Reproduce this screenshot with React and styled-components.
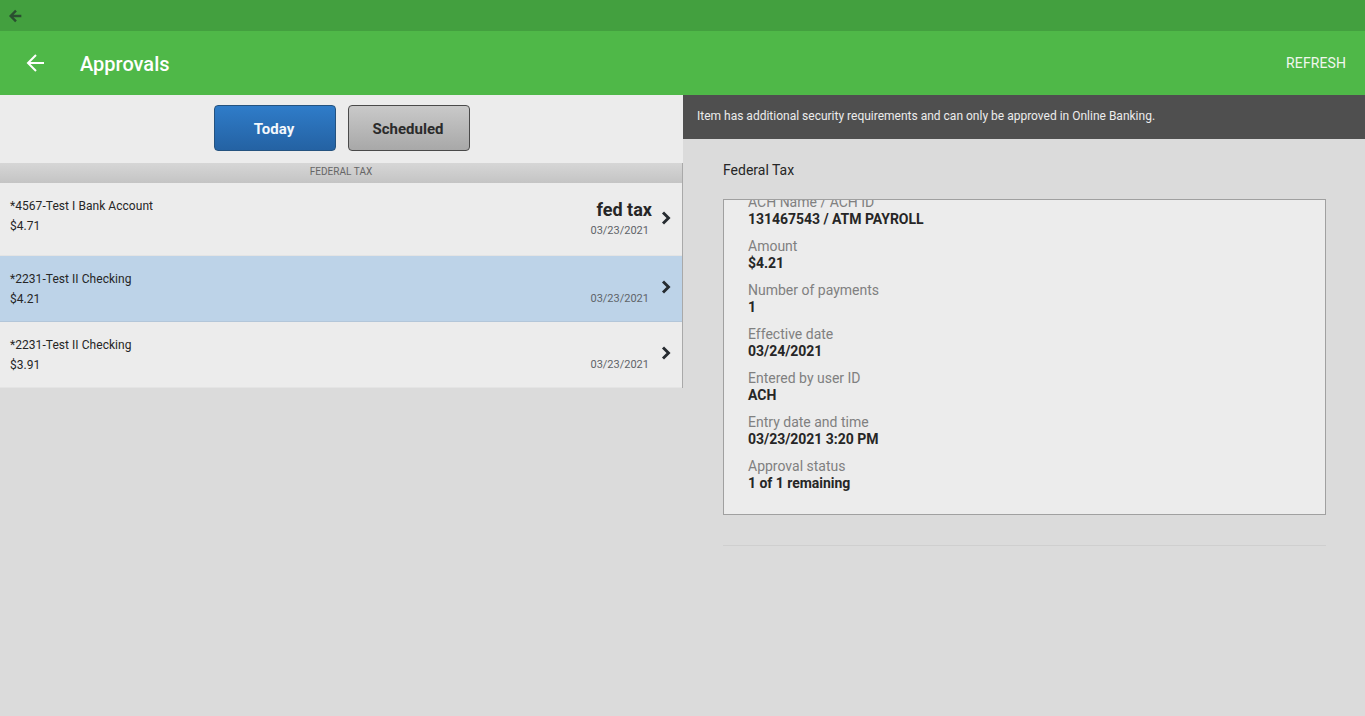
import React from "react";
import styled, { createGlobalStyle } from "styled-components";

const Global = createGlobalStyle`
  html, body { margin: 0; padding: 0; height: 100%; background: #dbdbdb; }
  body { font-family: Roboto, "Liberation Sans", sans-serif; color: #222; -webkit-font-smoothing: antialiased; }
  * { box-sizing: border-box; }
`;

const Page = styled.div`
  width: 1365px;
  height: 716px;
  display: flex;
  flex-direction: column;
  background: #dbdbdb;
  overflow: hidden;
`;

const StatusBar = styled.div`
  height: 31px;
  flex: none;
  background: #43a03f;
  display: flex;
  align-items: center;
  padding-left: 8px;
  color: #2a4f30;
`;

const AppBar = styled.header`
  height: 64px;
  flex: none;
  background: #4fb848;
  display: flex;
  align-items: center;
  color: #fff;
`;

const BackButton = styled.div`
  width: 80px;
  padding-left: 24px;
  display: flex;
  align-items: center;
`;

const Title = styled.h1`
  margin: 2px 0 0;
  flex: 1;
  font-size: 20px;
  font-weight: 500;
  line-height: 24px;
`;

const RefreshAction = styled.span`
  font-size: 14px;
  font-weight: 400;
  padding-right: 19px;
  letter-spacing: 0.1px;
  color: #f0f7ee;
`;

const Body = styled.div`
  flex: 1;
  display: flex;
  min-height: 0;
`;

const LeftColumn = styled.section`
  width: 683px;
  flex: none;
`;

const Segments = styled.div`
  height: 68px;
  background: #ececec;
  display: flex;
  align-items: center;
  justify-content: center;
  gap: 12px;
  padding: 0 0 2px 1px;
`;

const Segment = styled.button`
  width: 122px;
  height: 46px;
  border-radius: 4px;
  font-family: inherit;
  font-size: 15px;
  font-weight: 700;
  padding: 1px 2px 0 0;
  border: 1px solid ${(p) => (p.$active ? "#24527f" : "#4a4a4a")};
  color: ${(p) => (p.$active ? "#f4f8fc" : "#2b2b2b")};
  background: ${(p) =>
    p.$active
      ? "linear-gradient(#2f7cc9, #2462a3)"
      : "linear-gradient(#c9c9c9, #a8a8a8)"};
`;

const ListFrame = styled.div`
  border-right: 1px solid #a9a9a9;
`;

const SectionHeader = styled.div`
  height: 20px;
  background: linear-gradient(#d6d6d6, #c4c4c4);
  text-align: center;
  font-size: 10px;
  line-height: 17px;
  letter-spacing: 0.03px;
  color: #666;
`;

const Row = styled.div`
  height: ${(p) => p.$height}px;
  background: ${(p) => (p.$selected ? "#bdd3e8" : "#ececec")};
  border-bottom: 1px solid ${(p) => (p.$selected ? "#b3c6d9" : "#e4e4e4")};
  display: flex;
  align-items: flex-start;
  padding: ${(p) => p.$top}px 12px 0 10px;
  position: relative;
`;

const RowLeft = styled.div`
  flex: 1;
  font-size: 12px;
  line-height: 20px;
  letter-spacing: 0.05px;
  color: #262626;
`;

const RowRight = styled.div`
  width: 120px;
  margin-right: 21px;
  text-align: right;
`;

const Memo = styled.div`
  font-size: 18px;
  font-weight: 700;
  line-height: 22px;
  color: #262626;
  margin: 3px -3px 3px 0;
`;

const RowDate = styled.div`
  font-size: 11px;
  line-height: 14px;
  color: #5f6368;
  margin-top: ${(p) => p.$offset}px;
`;

const Chevron = styled.svg`
  position: absolute;
  right: 11px;
  top: ${(p) => p.$top}px;
  width: 10px;
  height: 14px;
`;

const RightColumn = styled.section`
  flex: 1;
  min-width: 0;
`;

const Notice = styled.div`
  height: 44px;
  background: #4f4f4f;
  color: #ececec;
  font-size: 12px;
  line-height: 43px;
  padding-left: 14px;
`;

const Detail = styled.div`
  padding: 21px 39px 0 40px;
`;

const DetailTitle = styled.div`
  font-size: 14px;
  line-height: 20px;
  color: #262626;
  margin-bottom: 19px;
`;

const Card = styled.div`
  height: 316px;
  background: #ececec;
  border: 1px solid #a0a0a0;
  overflow: hidden;
  padding-left: 24px;
`;

const Fields = styled.dl`
  margin: -6px 0 0;
`;

const Field = styled.div`
  margin-bottom: 10px;
`;

const FieldLabel = styled.dt`
  font-size: 14px;
  line-height: 17px;
  color: #808080;
`;

const FieldValue = styled.dd`
  margin: 0;
  font-size: 14px;
  font-weight: 700;
  line-height: 17px;
  letter-spacing: -0.03px;
  color: #262626;
`;

const Rule = styled.hr`
  margin: 30px 0 0;
  border: 0;
  border-top: 1px solid #cfcfcf;
`;

const fields = [
  ["ACH Name / ACH ID", "131467543 / ATM PAYROLL"],
  ["Amount", "$4.21"],
  ["Number of payments", "1"],
  ["Effective date", "03/24/2021"],
  ["Entered by user ID", "ACH"],
  ["Entry date and time", "03/23/2021 3:20 PM"],
  ["Approval status", "1 of 1 remaining"],
];

const rows = [
  { account: "*4567-Test I Bank Account", amount: "$4.71", memo: "fed tax", height: 73, top: 13, chevron: 28 },
  { account: "*2231-Test II Checking", amount: "$4.21", selected: true, height: 66, top: 13, chevron: 24, offset: 23 },
  { account: "*2231-Test II Checking", amount: "$3.91", height: 66, top: 13, chevron: 24, offset: 23 },
];

const ArrowLeft = ({ size, weight }) => (
  <svg width={size} height={size} viewBox="0 0 24 24" fill="none" stroke="currentColor" strokeWidth={weight}>
    <path d="M20 12H5M12 4l-8 8 8 8" />
  </svg>
);

export default function App() {
  return (
    <Page>
      <Global />
      <StatusBar>
        <ArrowLeft size={16} weight={3.6} />
      </StatusBar>
      <AppBar>
        <BackButton>
          <ArrowLeft size={24} weight={2} />
        </BackButton>
        <Title>Approvals</Title>
        <RefreshAction>REFRESH</RefreshAction>
      </AppBar>
      <Body>
        <LeftColumn>
          <Segments>
            <Segment $active>Today</Segment>
            <Segment>Scheduled</Segment>
          </Segments>
          <ListFrame>
            <SectionHeader>FEDERAL TAX</SectionHeader>
            {rows.map((r, i) => (
              <Row key={i} $selected={r.selected} $height={r.height} $top={r.top}>
                <RowLeft>
                  <div>{r.account}</div>
                  <div>{r.amount}</div>
                </RowLeft>
                <RowRight>
                  {r.memo && <Memo>{r.memo}</Memo>}
                  <RowDate $offset={r.offset || 0}>03/23/2021</RowDate>
                </RowRight>
                <Chevron $top={r.chevron} viewBox="0 0 10 14" fill="none" stroke="#262b30" strokeWidth="2.9">
                  <path d="M2 1.5 7.5 7 2 12.5" />
                </Chevron>
              </Row>
            ))}
          </ListFrame>
        </LeftColumn>
        <RightColumn>
          <Notice>Item has additional security requirements and can only be approved in Online Banking.</Notice>
          <Detail>
            <DetailTitle>Federal Tax</DetailTitle>
            <Card>
              <Fields>
                {fields.map(([label, value]) => (
                  <Field key={label}>
                    <FieldLabel>{label}</FieldLabel>
                    <FieldValue>{value}</FieldValue>
                  </Field>
                ))}
              </Fields>
            </Card>
            <Rule />
          </Detail>
        </RightColumn>
      </Body>
    </Page>
  );
}
